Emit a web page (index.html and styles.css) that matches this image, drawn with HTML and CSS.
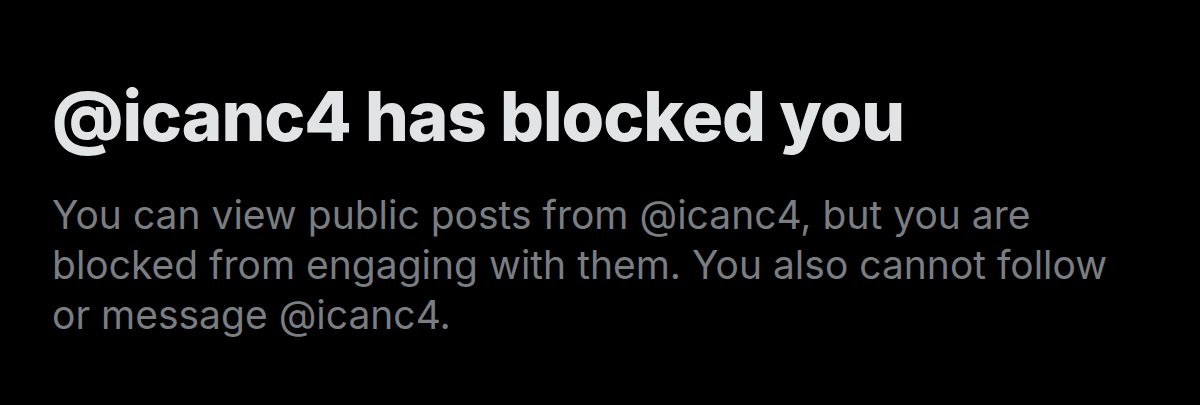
FILE: index.html
```html
<!doctype html>
<html lang="en">

<head>
    <meta charset="UTF-8">
    <meta name="viewport" content="width=device-width, initial-scale=1.0">
    <title>Blocked</title>
    <link rel="stylesheet" href="styles.css">
</head>

<body>
    <section class="blocked">
        <h1 class="blocked--title">@icanc4 has blocked you</h1>
        <p class="blocked--text">You can view public posts from @icanc4, but you are blocked from engaging with them. You also cannot follow or message @icanc4.</p>
    </section>
</body>

</html>
```

FILE: styles.css
```css
html,
body {
    margin: 0;
    background: #000000;
}

body {
    font-family: Inter, "Noto Sans", sans-serif;
    height: 405px;
    overflow: hidden;
}

.blocked {
    padding: 78px 0 0 52px;
    width: 1090px;
}

.blocked--title {
    font-size: 69px;
    font-weight: 800;
    line-height: 76px;
    letter-spacing: -1px;
    color: #e2e3e4;
    margin: 0 0 36px;
}

.blocked--text {
    font-size: 39px;
    font-weight: 400;
    line-height: 50px;
    color: #7a7d81;
    margin: 0;
}
```
